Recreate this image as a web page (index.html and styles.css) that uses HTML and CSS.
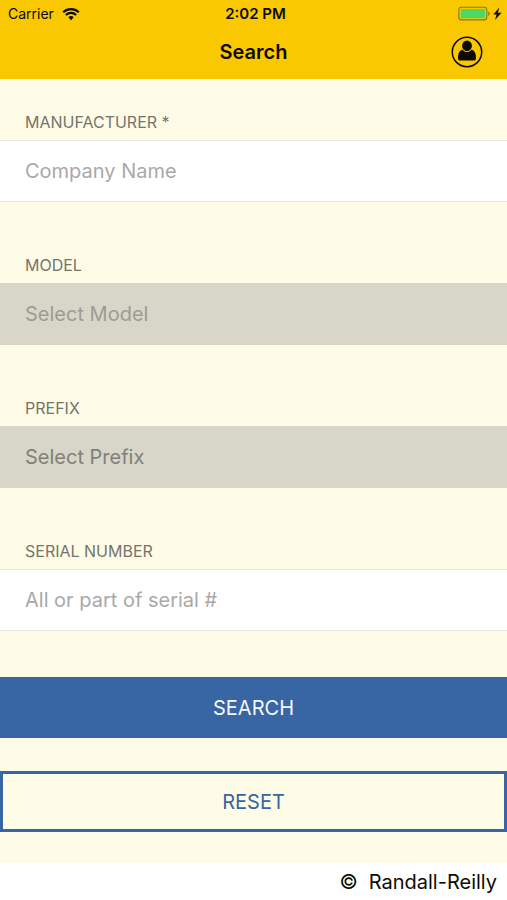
FILE: index.html
```html
<!DOCTYPE html>
<html lang="en">
<head>
<meta charset="utf-8">
<meta name="viewport" content="width=device-width, initial-scale=1">
<title>Search</title>
<link rel="stylesheet" href="styles.css">
</head>
<body>
<header class="header">
  <div class="status">
    <div class="carrier">
      <span>Carrier</span>
      <svg width="18" height="14" viewBox="0 0 18 14" aria-hidden="true">
        <path d="M1.2 5.2a11.2 11.2 0 0 1 15.6 0M3.9 8a7.3 7.3 0 0 1 10.2 0" fill="none" stroke="#0d0b00" stroke-width="2.2"/>
        <path d="M6.300 10.300a4 4 0 0 1 5.400 0L9 13.200z" fill="#0d0b00"/>
      </svg>
    </div>
    <span class="time">2:02 PM</span>
    <div class="power">
      <svg width="45" height="16" viewBox="0 0 45 16" aria-hidden="true">
        <rect x="0.8" y="1.300" width="28" height="12.600" rx="2.600" fill="none" stroke="#8f7510" stroke-width="1.100"/>
        <rect x="2.600" y="3" width="24.400" height="9.200" rx="1.200" fill="#4bd964"/>
        <path d="M30.200 5.500v4.400q1.500-.6 1.500-2.200t-1.500-2.200z" fill="#8f7510"/>
        <path d="M41.300 1.500l-6 7h3.300l-1.600 5.600 6.500-7.400h-3.600z" fill="#0d0b00"/>
      </svg>
    </div>
  </div>
  <div class="navbar">
    <h1 class="title">Search</h1>
    <button class="profile" type="button" aria-label="Profile">
      <svg width="32" height="32" viewBox="0 0 32 32" aria-hidden="true">
        <circle cx="16" cy="16" r="14.700" fill="none" stroke="#0d0b00" stroke-width="1.500"/>
        <ellipse cx="16" cy="9.800" rx="4.900" ry="5.400" fill="#0d0b00"/>
        <path d="M11.400 13.800C8.300 14.400 7 17.600 7 22q0 2.600 2.500 2.600h13q2.500 0 2.500-2.600c0-4.400-1.300-7.600-4.400-8.200Q18.700 16.200 16 16.200t-4.600-2.400z" fill="#0d0b00"/>
      </svg>
    </button>
  </div>
</header>
<main class="main">
  <form class="form">
    <div class="fields">
      <div class="field">
        <label class="label" for="manufacturer">MANUFACTURER *</label>
        <input class="control" id="manufacturer" type="text" placeholder="Company Name">
      </div>
      <div class="field">
        <label class="label" for="model">MODEL</label>
        <select class="control locked faint" id="model" disabled><option>Select Model</option></select>
      </div>
      <div class="field">
        <label class="label" for="prefix">PREFIX</label>
        <select class="control locked" id="prefix" disabled><option>Select Prefix</option></select>
      </div>
      <div class="field">
        <label class="label" for="serial">SERIAL NUMBER</label>
        <input class="control" id="serial" type="text" placeholder="All or part of serial #">
      </div>
    </div>
    <div class="actions">
      <button class="button primary" type="button">SEARCH</button>
      <button class="button outline" type="reset">RESET</button>
    </div>
  </form>
</main>
<footer class="footer"><span>©</span><span>Randall-Reilly</span></footer>
</body>
</html>
```
FILE: styles.css
```css
* {
  box-sizing: border-box;
}

body {
  margin: 0;
  min-height: 100vh;
  display: flex;
  flex-direction: column;
  background: #fff;
  color: #0d0b00;
  font-family: Inter, "Liberation Sans", sans-serif;
}

.header {
  background: #fac800;
  padding-bottom: 8px;
}

.status {
  display: grid;
  grid-template-columns: 1fr auto 1fr;
  align-items: center;
  height: 27px;
  padding: 0 4px 0 8px;
  font-size: 14px;
}

.carrier {
  display: flex;
  align-items: center;
  gap: 8px;
}

.time {
  font-size: 15px;
  font-weight: 600;
}

.power {
  display: flex;
  justify-content: flex-end;
}

.navbar {
  display: grid;
  grid-template-columns: 1fr auto 1fr;
  align-items: center;
  height: 44px;
  padding: 6px 24px 0;
}

.title {
  grid-column: 2;
  margin: 0;
  font-size: 20px;
  font-weight: 600;
}

.profile {
  justify-self: end;
  display: flex;
  padding: 0;
  border: 0;
  background: none;
}

.main {
  background: #fefce7;
  padding: 33px 0 31px;
}

.form {
  display: grid;
  gap: 46px;
}

.fields {
  display: grid;
  gap: 53px;
}

.field {
  display: grid;
  gap: 8px;
}

.label {
  padding: 0 25px;
  color: #75746c;
  font-size: 16px;
  line-height: 20px;
}

.control {
  appearance: none;
  width: 100%;
  height: 62px;
  margin: 0;
  padding: 0 25px;
  border: 1px solid #e8e8e2;
  border-width: 1px 0;
  border-radius: 0;
  background: #fff;
  color: #333;
  font-family: inherit;
  font-size: 20px;
}

.control::placeholder {
  color: #a9a9a9;
  opacity: 1;
}

.locked {
  border-color: #d7d6c9;
  background: #d7d6c9;
  color: #818078;
  opacity: 1;
}

.faint {
  color: #9d9c92;
}

.actions {
  display: grid;
  gap: 33px;
}

.button {
  height: 61px;
  padding: 0;
  border: 3px solid #3865a3;
  font-family: inherit;
  font-size: 20px;
}

.primary {
  background: #3865a3;
  color: #f4f7fc;
}

.outline {
  background: transparent;
  color: #3865a3;
}

.footer {
  display: flex;
  flex: 1;
  align-items: center;
  justify-content: flex-end;
  gap: 11px;
  padding: 0 10px;
  font-size: 20px;
}
```
